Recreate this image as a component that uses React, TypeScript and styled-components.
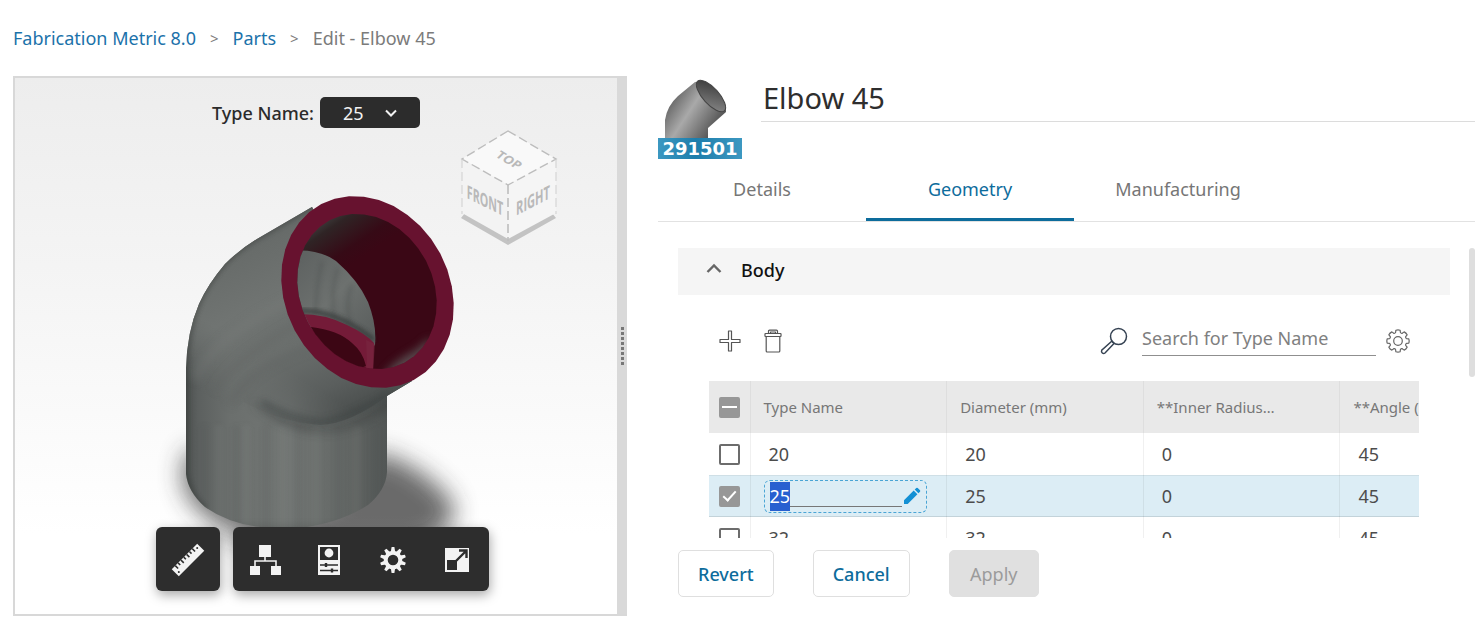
import React, { useEffect, useRef, useState } from 'react';
import styled, { createGlobalStyle } from 'styled-components';

const GlobalStyle = createGlobalStyle`
  *, *::before, *::after { box-sizing: border-box; }
  body {
    margin: 0;
    background: #fff;
    color: #4b4b4b;
    font-family: "Noto Sans", "Open Sans", sans-serif;
    font-size: 18px;
  }
  button, input, select { font: inherit; color: inherit; }
`;

/* ---------- page frame ---------- */

const Page = styled.div`
  display: flex;
  flex-direction: column;
  height: 100vh;
  min-height: 560px;
  padding: 0 5px 27px 13px;
`;

const Breadcrumbs = styled.nav`
  display: flex;
  align-items: center;
  gap: 14px;
  height: 76px;
  flex: none;
  color: #7b7b7b;
`;

const CrumbLink = styled.a`
  color: #1b72aa;
  text-decoration: none;
`;

const CrumbArrow = styled.span`
  font-size: 15px;
`;

const Columns = styled.main`
  display: grid;
  grid-template-columns: minmax(0, 614fr) minmax(0, 817fr);
  column-gap: 31px;
  flex: 1;
  min-height: 0;
`;

/* ---------- 3D viewer ---------- */

const Viewer = styled.section`
  display: flex;
  min-height: 0;
  border: 2px solid #d8d8d8;
  border-right: 0;
`;

const Stage = styled.div`
  position: relative;
  display: flex;
  flex-direction: column;
  justify-content: space-between;
  align-items: center;
  flex: 1;
  min-width: 0;
  padding: 19px 0 23px;
  background: linear-gradient(#ededed, #f5f5f5 40%, #ffffff 85%);
`;

const ModelDrawing = styled.svg`
  position: absolute;
  inset: 0;
  width: 100%;
  height: 100%;
`;

const CubeDrawing = styled.svg`
  position: absolute;
  top: 50px;
  right: 56px;
`;

const Splitter = styled.div`
  display: flex;
  flex-direction: column;
  align-items: center;
  justify-content: center;
  gap: 2px;
  width: 10px;
  background: #d9d9d9;
  cursor: col-resize;
`;

const Grip = styled.i`
  width: 3px;
  height: 3px;
  background: #777;
`;

const TypePicker = styled.div`
  position: relative;
  display: flex;
  align-items: center;
  gap: 6px;
  color: #2b2b2b;
  font-weight: 500;
`;

const SelectBox = styled.span`
  display: grid;
  align-items: center;
  color: #f2f2f2;
  > * { grid-area: 1 / 1; }
  > svg { justify-self: end; margin-right: 22px; pointer-events: none; }
`;

const TypeSelect = styled.select`
  appearance: none;
  width: 100px;
  height: 31px;
  padding: 0 0 0 23px;
  border: 0;
  border-radius: 5px;
  background: #2c2c2c;
  font-weight: 400;
`;

const ViewerToolbar = styled.div`
  position: relative;
  display: flex;
  gap: 13px;
  margin-left: 13px;
`;

const ToolGroup = styled.div`
  display: flex;
  border-radius: 6px;
  background: #2d2d2d;
  box-shadow: 1px 4px 12px rgba(0, 0, 0, 0.35);
`;

const ToolButton = styled.button`
  display: grid;
  place-items: center;
  width: 64px;
  height: 64px;
  padding: 2px 0 0;
  border: 0;
  background: none;
  color: #f3f3f3;
`;

/* ---------- editor ---------- */

const Editor = styled.section`
  display: flex;
  flex-direction: column;
  min-height: 0;
`;

const PartHeader = styled.header`
  display: flex;
  gap: 19px;
  flex: none;
  padding-top: 2px;
`;

const Thumbnail = styled.figure`
  display: flex;
  flex-direction: column;
  width: 84px;
  margin: 0;
`;

const PartNumber = styled.figcaption`
  height: 21px;
  background: linear-gradient(90deg, #3c98c1, #1d7dab 45%, #3c98c1);
  color: #fff;
  font: bold 18px/21px "DejaVu Sans", sans-serif;
  text-align: center;
`;

const PartName = styled.input`
  flex: 1;
  min-width: 0;
  height: 44px;
  padding: 0 2px 5px;
  border: 0;
  border-bottom: 1px solid #dcdcdc;
  background: none;
  color: #2e2e2e;
  font-size: 29px;
`;

const Tabs = styled.div`
  display: flex;
  flex: none;
  height: 63px;
  border-bottom: 1px solid #e2e2e2;
`;

const Tab = styled.button<{ $active?: boolean }>`
  flex: 0 1 208px;
  height: 62px;
  padding: 1px 0 0;
  border: 0;
  border-bottom: 3px solid ${(p) => (p.$active ? '#0d6c9c' : 'transparent')};
  background: none;
  color: ${(p) => (p.$active ? '#0d6c9c' : '#767676')};
`;

const ScrollArea = styled.div`
  display: flex;
  gap: 19px;
  flex: 1;
  min-height: 0;
  margin-top: 26px;
  padding-left: 20px;
  overflow: hidden;
`;

const ScrollTrack = styled.div`
  width: 6px;
  height: 100%;
`;

const ScrollThumb = styled.div`
  width: 6px;
  height: 129px;
  border-radius: 3px;
  background: #dedede;
`;

const Panel = styled.div`
  flex: 1;
  min-width: 0;
`;

const PanelHeading = styled.button`
  display: flex;
  align-items: center;
  gap: 19px;
  width: 100%;
  height: 47px;
  padding: 0 28px 3px;
  border: 0;
  background: #f5f5f5;
  color: #111;
  font-weight: 500;
`;

const PanelBody = styled.div`
  padding: 0 31px;
`;

const TableToolbar = styled.div`
  display: flex;
  align-items: center;
  gap: 19px;
  height: 86px;
  padding: 6px 9px 0;
`;

const IconButton = styled.button`
  display: grid;
  place-items: center;
  width: 24px;
  height: 26px;
  padding: 0;
  border: 0;
  background: none;
  color: #555;
`;

const SearchGroup = styled.label`
  display: flex;
  align-items: center;
  gap: 14px;
  margin-left: auto;
  margin-right: -9px;
`;

const SearchInput = styled.input`
  width: 234px;
  height: 30px;
  padding: 0 0 5px;
  border: 0;
  border-bottom: 1px solid #8f8f8f;
  background: none;
  &::placeholder { color: #808080; opacity: 1; }
`;

const TableClip = styled.div`
  overflow: hidden;
`;

const Table = styled.table`
  width: 828px;
  table-layout: fixed;
  border-collapse: collapse;
`;

const CheckColumn = styled.col`
  width: 41px;
`;

const HeadCell = styled.th`
  height: 52px;
  padding: 0 13px;
  border-right: 1px solid #dedede;
  background: #e9e9e9;
  color: #777;
  font-weight: 400;
  font-size: 15px;
  text-align: left;
  white-space: nowrap;
`;

const CheckHead = styled(HeadCell)`
  padding: 0 0 0 10px;
`;

const Row = styled.tr<{ $selected: boolean }>`
  background: ${(p) => (p.$selected ? '#dcedf5' : '#fff')};
  box-shadow: ${(p) => (p.$selected ? 'inset 0 1px #cfdfe6, inset 0 -1px #c3d3da' : 'none')};
`;

const Cell = styled.td`
  height: 42px;
  padding: 0 18px;
  border-right: 1px solid rgba(0, 0, 0, 0.06);
  color: #4c4c4c;
`;

const CheckCell = styled(Cell)`
  padding: 0 0 0 10px;
`;

const EditCell = styled(Cell)`
  padding: 0 0 0 13px;
`;

const CheckBox = styled.input`
  appearance: none;
  display: grid;
  place-items: center;
  width: 21px;
  height: 21px;
  margin: 0;
  border: 2px solid #6c6c6c;
  border-radius: 2px;
  background: #fff;
  &:checked, &:indeterminate {
    border-color: #979797;
    background: #979797;
  }
  &:checked::after {
    content: "";
    width: 7px;
    height: 13px;
    margin-top: -4px;
    border: solid #fff;
    border-width: 0 2px 2px 0;
    rotate: 42deg;
  }
  &:indeterminate::after {
    content: "";
    width: 15px;
    height: 2px;
    background: #fff;
  }
`;

const EditFrame = styled.label`
  display: flex;
  align-items: center;
  gap: 1px;
  width: 163px;
  height: 33px;
  padding: 0 5px;
  border: 1px dashed #4aa5d5;
  border-radius: 6px;
`;

const EditInput = styled.input`
  width: 132px;
  height: 29px;
  padding: 0;
  border: 0;
  outline: none;
  background: linear-gradient(#777, #777) 0 24px / 100% 1px no-repeat;
  line-height: 29px;
  &::selection { background: #2860d0; color: #fff; }
`;

const Actions = styled.footer`
  display: flex;
  gap: 39px;
  flex: none;
  padding: 12px 0 19px 20px;
`;

const ActionButton = styled.button`
  min-width: 90px;
  height: 47px;
  padding: 0 19px;
  border: 1px solid #dfdfdf;
  border-radius: 5px;
  background: #fff;
  color: #0d6c9c;
  font-weight: 500;
  &:disabled {
    border-color: #e0e0e0;
    background: #e0e0e0;
    color: #9b9b9b;
    font-weight: 400;
  }
`;

/* ---------- drawings ---------- */

function facets(cx: number, cy: number, rx: number, ry: number, deg: number, n: number) {
  const t = (deg * Math.PI) / 180;
  return Array.from({ length: n }, (_, i) => {
    const a = (i / n) * Math.PI * 2;
    const u = rx * Math.cos(a);
    const v = ry * Math.sin(a);
    const x = cx + u * Math.cos(t) - v * Math.sin(t);
    const y = cy + u * Math.sin(t) + v * Math.cos(t);
    return `${x.toFixed(1)},${y.toFixed(1)}`;
  }).join(' ');
}

const RIM = facets(367.5, 292, 99.4, 82.3, 62.3, 36);
const BORE = facets(367, 291.5, 80.4, 66.5, 62.3, 36);

function ElbowModel() {
  const body =
    'M312 207 L257 239 Q239 250 225 264 Q208 284 199 304 Q187 332 186 368 L186 474 Q188 492 205 507 Q240 532 300 528 Q340 523 368 505 Q386 490 387 472 L387 396 L412 381 Z';
  return (
    <ModelDrawing viewBox="15 78 602 536" aria-label="3D model of the elbow" role="img">
      <defs>
        <linearGradient id="base" gradientUnits="userSpaceOnUse" x1="186" x2="387" y1="0" y2="0">
          <stop offset="0" stopColor="#4c504f" />
          <stop offset=".06" stopColor="#5c605f" />
          <stop offset=".22" stopColor="#6b6f6d" />
          <stop offset=".52" stopColor="#727674" />
          <stop offset=".78" stopColor="#646866" />
          <stop offset="1" stopColor="#525655" />
        </linearGradient>
        <linearGradient id="arm" gradientUnits="userSpaceOnUse" x1="236" y1="236" x2="325" y2="424">
          <stop offset="0" stopColor="#626665" />
          <stop offset=".1" stopColor="#686c6a" />
          <stop offset=".35" stopColor="#707472" />
          <stop offset=".6" stopColor="#6b6f6d" />
          <stop offset=".85" stopColor="#5a5e5d" />
          <stop offset="1" stopColor="#4b4f4e" />
        </linearGradient>
        <linearGradient id="armFade" gradientUnits="userSpaceOnUse" x1="215" y1="400" x2="247" y2="346">
          <stop offset="0" stopColor="#000" />
          <stop offset="1" stopColor="#fff" />
        </linearGradient>
        <linearGradient id="back" gradientUnits="userSpaceOnUse" x1="300" y1="260" x2="372" y2="330">
          <stop offset="0" stopColor="#5f6362" />
          <stop offset=".5" stopColor="#6d716f" />
          <stop offset="1" stopColor="#5c605f" />
        </linearGradient>
        <linearGradient id="bore" gradientUnits="userSpaceOnUse" x1="322" y1="212" x2="356" y2="262">
          <stop offset="0" stopColor="#454948" />
          <stop offset=".3" stopColor="#2f2425" />
          <stop offset=".75" stopColor="#360a16" />
          <stop offset="1" stopColor="#3a0715" />
        </linearGradient>
        <filter id="blur2"><feGaussianBlur stdDeviation="2" /></filter>
        <filter id="blur3" x="-20%" y="-60%" width="140%" height="220%"><feGaussianBlur stdDeviation="3" /></filter>
        <filter id="blur5" x="-20%" y="-60%" width="140%" height="220%"><feGaussianBlur stdDeviation="5" /></filter>
        <filter id="blur12" x="-50%" y="-50%" width="200%" height="200%"><feGaussianBlur stdDeviation="12" /></filter>
        <clipPath id="bodyClip"><path d={body} /></clipPath>
        <clipPath id="boreClip"><polygon points={BORE} /></clipPath>
        <mask id="armMask"><rect x="150" y="180" width="320" height="360" fill="url(#armFade)" /></mask>
      </defs>

      <path d="M375 452 Q415 462 446 494 Q462 512 446 530 L420 545 L230 545 L330 500 Z" fill="#333" opacity=".72" filter="url(#blur12)" />
      <path d="M188 450 Q176 480 190 500 Q208 524 240 535 L300 535 L200 450 Z" fill="#333" opacity=".7" filter="url(#blur12)" />

      <path d={body} fill="url(#base)" />
      <g clipPath="url(#bodyClip)">
        <g opacity=".22" filter="url(#blur2)">
          {[200, 214, 232, 242, 262, 278, 294, 312, 334, 352, 370].map((x, i) => (
            <rect key={x} x={x} y="425" width="9" height="130" fill={i % 2 ? '#8b8f8d' : '#4f5352'} opacity=".5" />
          ))}
        </g>
        <path d="M250 400 Q280 420 322 428 Q360 424 392 396 L392 406 Q350 438 305 431 Q268 422 250 400 Z" fill="#353938" opacity=".5" filter="url(#blur5)" />
        <path
          d="M180 460 L180 200 L320 190 L430 372 L387 396 Q350 424 320 425 Q280 422 244 402 L180 460 Z"
          fill="url(#arm)"
          mask="url(#armMask)"
        />
        <path d="M262 402 Q292 420 322 422 Q352 418 388 394" fill="none" stroke="#393d3c" strokeWidth="6" opacity=".4" filter="url(#blur3)" />
        <path d="M320 202 L257 238 Q239 249 225 263 Q208 283 199 303 Q187 332 186 368 L186 474 Q190 494 205 508" fill="none" stroke="#303433" strokeWidth="5" opacity=".4" filter="url(#blur2)" />
        <path d="M215 390 Q240 355 300 322 M230 405 Q250 365 318 345" fill="none" stroke="#555958" strokeWidth="7" opacity=".2" filter="url(#blur5)" />
        <path d="M195 380 Q210 340 290 300" fill="none" stroke="#858987" strokeWidth="9" opacity=".2" filter="url(#blur5)" />
      </g>

      <polygon points={RIM} fill="#67122f" />
      <polygon points={BORE} fill="url(#bore)" />
      <g clipPath="url(#boreClip)">
        <path d="M382 378 Q392 362 416 350 L430 338 L434 350 L400 380 Z" fill="#656967" opacity=".7" filter="url(#blur5)" />
        <path d="M290 251 Q318 248 336 261 Q358 280 368 302 Q377 325 375 345 L366 352 L290 320 Z" fill="url(#back)" />
        <path d="M322 262 Q316 285 316 314 M338 268 Q330 290 334 318 M352 285 Q345 300 350 324" fill="none" stroke="#4c504f" strokeWidth="3" opacity=".4" filter="url(#blur2)" />
        <path d="M298 311 Q335 309 374 340" fill="none" stroke="#2f3332" strokeWidth="5" opacity=".7" filter="url(#blur2)" />
        <path d="M296 314 Q324 313 347 325 Q366 334 374 343 L373 372 L296 372 Z" fill="#741b38" />
        <path d="M311 327 Q338 330 352 343 Q363 352 366 366 L350 372 L311 350 Z" fill="#3c0614" />
        <path d="M366 340 L375 344 L373 372 L365 372 L367 362 Z" fill="#7a2942" opacity=".5" />
      </g>
    </ModelDrawing>
  );
}

function ViewCube() {
  return (
    <CubeDrawing width="104" height="120" viewBox="457 128 104 120" role="img" aria-label="View cube">
      <path d="M461 218 L465 213 L508 235 L552 213 L556 218 L508 245 Z" fill="#c3c3c3" />
      <path d="M508 131 L556 159 L508 185 L462 159 Z" fill="#f9f9f9" />
      <path d="M462 159 L508 185 V239 L462 213 Z" fill="#f3f3f3" />
      <path d="M556 159 L508 185 V239 L556 213 Z" fill="#f5f5f5" />
      <g fill="none" stroke="#bdbdbd" strokeWidth="1" strokeDasharray="9 4">
        <path d="M508 131 L462 159 L508 185 L556 159 Z" strokeWidth="1.4" />
        <path d="M508 185 V241" strokeWidth="1.6" />
        <path d="M462 159 V214 M556 159 V214" stroke="#cfcfcf" />
      </g>
      <g fill="#b9b9b9" fontFamily="Open Sans, Noto Sans, sans-serif" fontWeight="700" fontSize="17" textAnchor="middle">
        <text transform="matrix(.66 .4 -.5 .5 506 163)">TOP</text>
        <text transform="matrix(.63 .31 0 1.1 485 207)">FRONT</text>
        <text transform="matrix(.65 -.34 0 1.1 533 207)">RIGHT</text>
      </g>
    </CubeDrawing>
  );
}

function ElbowThumb() {
  return (
    <svg width="84" height="60" viewBox="658 78 84 60" aria-hidden="true">
      <defs>
        <linearGradient id="thumb" gradientUnits="userSpaceOnUse" x1="668" y1="104" x2="714" y2="134">
          <stop offset="0" stopColor="#666" />
          <stop offset=".4" stopColor="#a9a9a9" />
          <stop offset="1" stopColor="#4f4f4f" />
        </linearGradient>
        <linearGradient id="thumbBore" gradientUnits="userSpaceOnUse" x1="700" y1="85" x2="718" y2="110">
          <stop offset="0" stopColor="#3c3c3c" />
          <stop offset="1" stopColor="#858585" />
        </linearGradient>
      </defs>
      <path d="M665 138 V120 Q667 106 678 96 L695 82 Q704 80 716 92 Q727 104 726 112 L708 128 V138 Z" fill="url(#thumb)" />
      <ellipse cx="711" cy="96" rx="20" ry="8" transform="rotate(48 711 96)" fill="url(#thumbBore)" stroke="#444" />
    </svg>
  );
}

const TOOTH_ANGLES = [0, 45, 90, 135, 180, 225, 270, 315];

const RulerIcon = () => (
  <svg width="34" height="34" viewBox="0 0 34 34">
    <g transform="rotate(-45 17 17)">
      <path d="M-1 12H35V22H-1Z" fill="currentColor" />
      <path d="M4 12v4M8 12v3M12 12v4M16 12v3M20 12v4M24 12v3M28 12v4" stroke="#2d2d2d" strokeWidth="1.6" />
      <circle cx="32" cy="15" r="1" fill="#2d2d2d" />
      <circle cx="2" cy="19" r="1" fill="#2d2d2d" />
    </g>
  </svg>
);

const TreeIcon = () => (
  <svg width="32" height="32" viewBox="0 0 32 32" fill="currentColor">
    <path d="M10 1h12v12H10zM1 22h10v9H1zM22 22h10v9H22z" />
    <path d="M16 13v4M6 22v-5h21v5" fill="none" stroke="currentColor" strokeWidth="1.6" />
  </svg>
);

const PropertiesIcon = () => (
  <svg width="24" height="32" viewBox="0 0 24 32">
    <path d="M1 1h22v30H1z" fill="currentColor" />
    <path d="M3 3h18v13H3z" fill="#2d2d2d" />
    <circle cx="12" cy="9" r="4.4" fill="currentColor" />
    <path d="M3 21h18M3 26.500h18" stroke="#2d2d2d" strokeWidth="1.4" />
    <path d="M9 19v4M15 24.500v4" stroke="#2d2d2d" strokeWidth="2.4" />
  </svg>
);

const SettingsIcon = () => (
  <svg width="28" height="28" viewBox="0 0 28 28">
    <circle cx="14" cy="14" r="7.300" fill="none" stroke="currentColor" strokeWidth="4" />
    {[0, 36, 72, 108, 144, 180, 216, 252, 288, 324].map((a) => (
      <path key={a} d="M11.800 6 L12.600 1 H15.400 L16.200 6 Z" fill="currentColor" transform={`rotate(${a} 14 14)`} />
    ))}
  </svg>
);

const ExpandIcon = () => (
  <svg width="26" height="26" viewBox="0 0 26 26">
    <path d="M1 1h24v24H1z" fill="currentColor" />
    <path d="M3 13h10v10H3z" fill="#2d2d2d" />
    <path d="M12 14 22 4M15 3.500h7.500V11" fill="none" stroke="#2d2d2d" strokeWidth="2.400" />
  </svg>
);

const PlusIcon = () => (
  <svg width="22" height="22" viewBox="0 0 22 22" fill="none" stroke="currentColor" strokeWidth="1.2">
    <path d="M9.500 1h3v8.500H21v3h-8.500V21h-3v-8.500H1v-3h8.500z" strokeLinejoin="round" />
  </svg>
);

const TrashIcon = () => (
  <svg width="18" height="24" viewBox="0 0 18 24" fill="none" stroke="currentColor" strokeWidth="1.2" strokeLinejoin="round">
    <rect x="1" y="4.500" width="16" height="3" rx=".5" />
    <path d="M2.200 7.500V22Q2.200 23 3.200 23H14.800Q15.800 23 15.800 22V7.500" />
    <path d="M4.500 4.500V2.200Q4.500 1.200 5.500 1.200H12.500Q13.500 1.200 13.500 2.200V4.500M6.500 4.500V3H11.500V4.500" />
  </svg>
);

const SearchIcon = () => (
  <svg width="28" height="28" viewBox="0 0 28 28" fill="none" stroke="#354252" strokeWidth="1.5">
    <circle cx="18.500" cy="9.500" r="8" />
    <path d="M12 14 1.700 23.300Q1 25 2.300 26Q3.600 27 5 26L14 16.500M12 14l2 2.500" />
  </svg>
);

const GearIcon = () => (
  <svg width="24" height="24" viewBox="0 0 24 24" fill="none" stroke="#666" strokeWidth="1.2" strokeLinejoin="round">
    <path
      d={
        TOOTH_ANGLES.map((deg, i) => {
          const at = (r: number, off: number) => {
            const a = ((deg + off) * Math.PI) / 180;
            return `${(12 + r * Math.cos(a)).toFixed(2)} ${(12 + r * Math.sin(a)).toFixed(2)}`;
          };
          return `${i ? 'L' : 'M'}${at(8.800, -16)} L${at(11, -11)} Q${at(11.500, 0)} ${at(11, 11)} L${at(8.800, 16)} Q${at(8, 22.5)} ${at(8.800, 29)}`;
        }).join(' ') + 'Z'
      }
    />
    <circle cx="12" cy="12" r="4.300" />
  </svg>
);

const PencilIcon = () => (
  <svg width="18" height="18" viewBox="0 0 18 18" fill="#1390d4">
    <path d="M1 13.300 10.700 3.600 14.400 7.300 4.700 17H1zM11.700 2.600 13.300 1Q14 .4 14.700 1L17 3.300Q17.600 4 17 4.700L15.400 6.300z" />
  </svg>
);

/* ---------- data ---------- */

const HEADERS = ['Type Name', 'Diameter (mm)', '**Inner Radius…', '**Angle (mm)'];

const ROWS = [
  { name: '20', diameter: '20', radius: '0', angle: '45' },
  { name: '25', diameter: '25', radius: '0', angle: '45' },
  { name: '32', diameter: '32', radius: '0', angle: '45' },
];

const TABS = ['Details', 'Geometry', 'Manufacturing'];

export default function App() {
  const [tab, setTab] = useState('Geometry');
  const [checked, setChecked] = useState<string[]>(['25']);
  const allRef = useRef<HTMLInputElement>(null);
  const editRef = useRef<HTMLInputElement>(null);

  useEffect(() => {
    if (allRef.current) allRef.current.indeterminate = checked.length > 0 && checked.length < ROWS.length;
  }, [checked]);

  useEffect(() => {
    editRef.current?.focus({ preventScroll: true });
    editRef.current?.select();
  }, []);

  const toggle = (name: string) =>
    setChecked((c) => (c.includes(name) ? c.filter((n) => n !== name) : [...c, name]));

  return (
    <>
      <GlobalStyle />
      <Page>
        <Breadcrumbs aria-label="Breadcrumb">
          <CrumbLink href="#library">Fabrication Metric 8.0</CrumbLink>
          <CrumbArrow>&gt;</CrumbArrow>
          <CrumbLink href="#parts">Parts</CrumbLink>
          <CrumbArrow>&gt;</CrumbArrow>
          <span>Edit - Elbow 45</span>
        </Breadcrumbs>

        <Columns>
          <Viewer aria-label="Viewer">
            <Stage>
              <ElbowModel />
              <ViewCube />
              <TypePicker>
                <label htmlFor="type-name">Type Name:</label>
                <SelectBox>
                  <TypeSelect id="type-name" defaultValue="25">
                    {ROWS.map((r) => (
                      <option key={r.name}>{r.name}</option>
                    ))}
                  </TypeSelect>
                  <svg width="14" height="10" viewBox="0 0 14 10" fill="none" stroke="currentColor" strokeWidth="2">
                    <path d="M2 2.500 7 7.500 12 2.500" />
                  </svg>
                </SelectBox>
              </TypePicker>
              <ViewerToolbar>
                <ToolGroup>
                  <ToolButton aria-label="Measure"><RulerIcon /></ToolButton>
                </ToolGroup>
                <ToolGroup>
                  <ToolButton aria-label="Model browser"><TreeIcon /></ToolButton>
                  <ToolButton aria-label="Properties"><PropertiesIcon /></ToolButton>
                  <ToolButton aria-label="Settings"><SettingsIcon /></ToolButton>
                  <ToolButton aria-label="Full screen"><ExpandIcon /></ToolButton>
                </ToolGroup>
              </ViewerToolbar>
            </Stage>
            <Splitter role="separator" aria-orientation="vertical">
              {Array.from({ length: 8 }, (_, i) => (
                <Grip key={i} />
              ))}
            </Splitter>
          </Viewer>

          <Editor>
            <PartHeader>
              <Thumbnail>
                <ElbowThumb />
                <PartNumber>291501</PartNumber>
              </Thumbnail>
              <PartName aria-label="Part name" defaultValue="Elbow 45" />
            </PartHeader>

            <Tabs role="tablist">
              {TABS.map((t) => (
                <Tab key={t} role="tab" aria-selected={t === tab} $active={t === tab} onClick={() => setTab(t)}>
                  {t}
                </Tab>
              ))}
            </Tabs>

            <ScrollArea>
              <Panel>
                <PanelHeading aria-expanded="true">
                  <svg width="16" height="16" viewBox="0 0 16 16" fill="none" stroke="#666" strokeWidth="2.400">
                    <path d="M1.500 10 8 3.500 14.500 10" />
                  </svg>
                  Body
                </PanelHeading>
                <PanelBody>
                  <TableToolbar>
                    <IconButton aria-label="Add"><PlusIcon /></IconButton>
                    <IconButton aria-label="Delete"><TrashIcon /></IconButton>
                    <SearchGroup>
                      <SearchIcon />
                      <SearchInput type="text" aria-label="Search for Type Name" placeholder="Search for Type Name" />
                    </SearchGroup>
                    <IconButton aria-label="Table settings"><GearIcon /></IconButton>
                  </TableToolbar>
                  <TableClip>
                    <Table>
                      <colgroup>
                        <CheckColumn />
                        <col />
                        <col />
                        <col />
                        <col />
                      </colgroup>
                      <thead>
                        <tr>
                          <CheckHead>
                            <CheckBox
                              ref={allRef}
                              type="checkbox"
                              aria-label="Select all"
                              checked={checked.length === ROWS.length}
                              onChange={() => setChecked(checked.length === ROWS.length ? [] : ROWS.map((r) => r.name))}
                            />
                          </CheckHead>
                          {HEADERS.map((h) => (
                            <HeadCell key={h}>{h}</HeadCell>
                          ))}
                        </tr>
                      </thead>
                      <tbody>
                        {ROWS.map((r) => (
                          <Row key={r.name} $selected={checked.includes(r.name)}>
                            <CheckCell>
                              <CheckBox
                                type="checkbox"
                                aria-label={`Select ${r.name}`}
                                checked={checked.includes(r.name)}
                                onChange={() => toggle(r.name)}
                              />
                            </CheckCell>
                            {r.name === '25' ? (
                              <EditCell>
                                <EditFrame>
                                  <EditInput ref={editRef} aria-label="Type name value" defaultValue={r.name} />
                                  <PencilIcon />
                                </EditFrame>
                              </EditCell>
                            ) : (
                              <Cell>{r.name}</Cell>
                            )}
                            <Cell>{r.diameter}</Cell>
                            <Cell>{r.radius}</Cell>
                            <Cell>{r.angle}</Cell>
                          </Row>
                        ))}
                      </tbody>
                    </Table>
                  </TableClip>
                </PanelBody>
              </Panel>
              <ScrollTrack>
                <ScrollThumb />
              </ScrollTrack>
            </ScrollArea>

            <Actions>
              <ActionButton>Revert</ActionButton>
              <ActionButton>Cancel</ActionButton>
              <ActionButton disabled>Apply</ActionButton>
            </Actions>
          </Editor>
        </Columns>
      </Page>
    </>
  );
}
